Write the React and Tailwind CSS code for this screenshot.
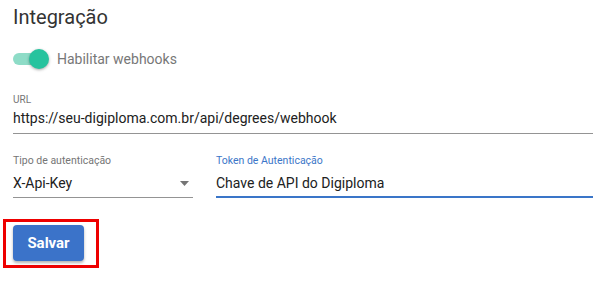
import React, { useState } from 'react';

const font = { fontFamily: 'Roboto, "Liberation Sans", sans-serif' };

function Toggle({ on, onChange }) {
  return (
    <button onClick={() => onChange(!on)} className="relative w-[37px] h-[20px] cursor-pointer">
      <span className={`absolute left-0 top-[4px] w-[34px] h-[12px] rounded-full ${on ? 'bg-[#8edcc7]' : 'bg-[#bdbdbd]'}`} />
      <span className={`absolute top-0 w-[20px] h-[20px] rounded-full shadow-[0_1px_3px_rgba(0,0,0,0.35)] ${on ? 'left-[16px] bg-[#27c39e]' : 'left-0 bg-[#f5f5f5]'}`} />
    </button>
  );
}

export default function App() {
  const [enabled, setEnabled] = useState(true);
  const [url, setUrl] = useState('https://seu-digiploma.com.br/api/degrees/webhook');
  const [token, setToken] = useState('Chave de API do Digiploma');

  return (
    <div className="pl-[13px] pt-[5px] bg-white text-[#212121]" style={font}>
      <h2 className="text-[20px] leading-[24px] text-[#333]">Integração</h2>

      <div className="mt-[20px] flex items-center gap-[7px]">
        <Toggle on={enabled} onChange={setEnabled} />
        <span className="text-[14px] leading-[20px] text-[#777]">Habilitar webhooks</span>
      </div>

      <div className="mt-[25px]">
        <label className="block text-[10px] leading-[12px] text-[#757575]">URL</label>
        <input
          value={url}
          onChange={e => setUrl(e.target.value)}
          className="mt-[2px] block w-full text-[14px] leading-[20px] pb-[5px] border-b border-[#949494] outline-none"
        />
      </div>

      <div className="mt-[21px] flex gap-[23px]">
        <div className="w-[180px]">
          <label className="block text-[10.5px] leading-[12px] text-[#757575]">Tipo de autenticação</label>
          <div className="mt-[6px] flex items-center justify-between text-[14px] leading-[20px] pb-[4px] border-b border-[#949494]">
            <span>X-Api-Key</span>
            <svg width="9" height="5" viewBox="0 0 9 5" className="mr-[4px]">
              <path d="M0 0h9L4.5 5z" fill="#757575" />
            </svg>
          </div>
        </div>
        <div className="flex-1">
          <label className="block text-[10.5px] leading-[12px] text-[#3b76c8]">Token de Autenticação</label>
          <input
            value={token}
            onChange={e => setToken(e.target.value)}
            className="mt-[6px] block w-full text-[14px] leading-[20px] pb-[3px] border-b-2 border-[#3a75c8] outline-none"
          />
        </div>
      </div>

      <div className="mt-[21px] ml-[-10px] inline-block border-[3px] border-[#ee0000] pl-[7px] pt-[3px] pr-[12px] pb-[4px]">
        <button className="w-[71px] h-[36px] rounded-[4px] bg-[#3b73c9] text-white text-[15px] font-bold shadow-[0_2px_3px_rgba(0,0,0,0.3)] cursor-pointer">
          Salvar
        </button>
      </div>
    </div>
  );
}
